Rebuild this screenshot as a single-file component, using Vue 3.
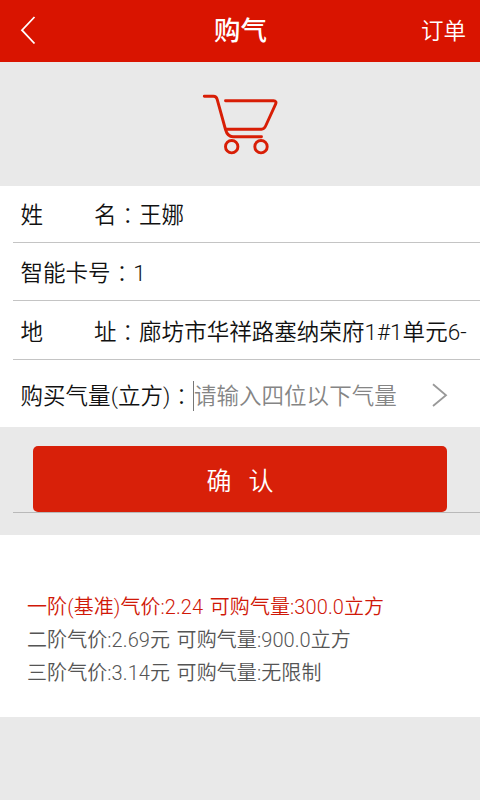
<script setup>
const rows = [
  { first: '姓', last: '名', value: '王娜' },
  { label: '智能卡号', value: '1' },
  { first: '地', last: '址', value: '廊坊市华祥路塞纳荣府1#1单元6-' },
]
const tiers = [
  { text: '一阶(基准)气价:2.24 可购气量:300.0立方', active: true },
  { text: '二阶气价:2.69元 可购气量:900.0立方' },
  { text: '三阶气价:3.14元 可购气量:无限制' },
]
</script>

<template>
  <div class="page">
    <header class="bar">
      <svg class="back" width="16" height="30" viewBox="0 0 16 30">
        <path d="M14.5 1 L2 14.2 L14.5 27.5" fill="none" stroke="#fff" stroke-width="1.8" />
      </svg>
      <h1 class="title">购气</h1>
      <span class="orders">订单</span>
    </header>

    <div class="hero">
      <svg width="100" height="90" viewBox="0 0 100 90" fill="none" stroke="#d81e06" stroke-width="2.9" stroke-linecap="round" stroke-linejoin="round">
        <path d="M14.3 16.3 H23.5 Q26.3 16.3 27.1 19.2 L35.5 49.5 Q37.5 56.7 43 56.7 H71.5" />
        <path d="M35.5 20.8 H83.5 Q87 20.8 85.6 24.2 L75.6 46 Q74.2 49.2 71.5 49.2 H36" />
        <circle cx="41.7" cy="66.7" r="6.2" />
        <circle cx="71" cy="66.7" r="6.2" />
      </svg>
    </div>

    <section class="form">
      <div v-for="row in rows" :key="row.value" class="row">
        <span v-if="row.label">{{ row.label }}</span>
        <span v-else class="spread"><span>{{ row.first }}</span><span>{{ row.last }}</span></span>
        <span class="colon">：</span>
        <span>{{ row.value }}</span>
      </div>
      <div class="row amount">
        <span>购买气量(立方)</span>
        <span class="colon">：</span>
        <span class="field">请输入四位以下气量</span>
        <svg class="arrow" width="16" height="24" viewBox="0 0 16 24">
          <path d="M1 1.2 L14 12.2 L1 23" fill="none" stroke="#999" stroke-width="1.8" />
        </svg>
      </div>
    </section>

    <div class="action">
      <button class="confirm">确<span class="gap"></span>认</button>
    </div>

    <section class="tiers">
      <p v-for="tier in tiers" :key="tier.text" :class="{ active: tier.active }">{{ tier.text }}</p>
    </section>
  </div>
</template>

<style>
body {
  background: #e9e9e9;
}
</style>

<style scoped>
.page {
  width: 480px;
  height: 800px;
  overflow: hidden;
  background: #e9e9e9;
  font-family: Roboto, "Noto Sans CJK SC", sans-serif;
  font-weight: 350;
  color: #111;
}
.bar {
  box-sizing: border-box;
  height: 62px;
  padding: 0 14px 0 20px;
  display: grid;
  grid-template-columns: 1fr auto 1fr;
  align-items: center;
  background: #d91400;
  color: #fff;
}
.title {
  margin: 0 0 0 -5px;
  font-size: 26.5px;
  line-height: 40px;
  font-weight: 500;
}
.orders {
  justify-self: end;
  font-size: 22.5px;
  line-height: 40px;
}
.hero {
  height: 124px;
  padding-top: 18px;
  box-sizing: border-box;
  display: flex;
  justify-content: center;
}
.form {
  box-sizing: border-box;
  height: 241px;
  padding-left: 13px;
  background: #fff;
}
.row {
  box-sizing: border-box;
  height: 58.7px;
  padding: 4px 0 0 7.5px;
  display: flex;
  align-items: center;
  border-bottom: 1px solid #c4c4c4;
  font-size: 22.5px;
  line-height: 32px;
  letter-spacing: 0.04px;
  white-space: nowrap;
}
.row:first-child {
  height: 56.5px;
  padding-top: 3px;
}
.amount {
  height: 67px;
  padding-top: 6px;
  border-bottom: 0;
}
.spread {
  width: 96px;
  display: flex;
  justify-content: space-between;
}
.colon {
  margin-top: -3px;
  font-family: "Noto Sans CJK TC", sans-serif;
  font-weight: 300;
}
.field {
  border-left: 1px solid #777;
  height: 30px;
  line-height: 30px;
  color: #858585;
}
.arrow {
  margin: -2px 0 0 35px;
}
.action {
  box-sizing: border-box;
  height: 108px;
  padding: 19px 0 22px 13px;
}
.action::after {
  content: "";
  display: block;
  height: 1px;
  background: #b9b9b9;
}
.confirm {
  display: flex;
  align-items: center;
  justify-content: center;
  width: 414px;
  height: 66px;
  margin: 0 0 0 20px;
  padding: 0;
  border: 0;
  border-radius: 5px;
  background: #d82009;
  color: #fff;
  font: inherit;
  font-size: 25px;
}
.gap {
  width: 17px;
}
.tiers {
  box-sizing: border-box;
  height: 182px;
  padding: 56px 0 0 27px;
  background: #fff;
  color: #555;
  font-size: 20px;
  line-height: 32.8px;
  letter-spacing: 0.08px;
  word-spacing: 1.6px;
  white-space: nowrap;
}
.tiers p {
  margin: 0;
}
.tiers .active {
  color: #d01808;
}
</style>
